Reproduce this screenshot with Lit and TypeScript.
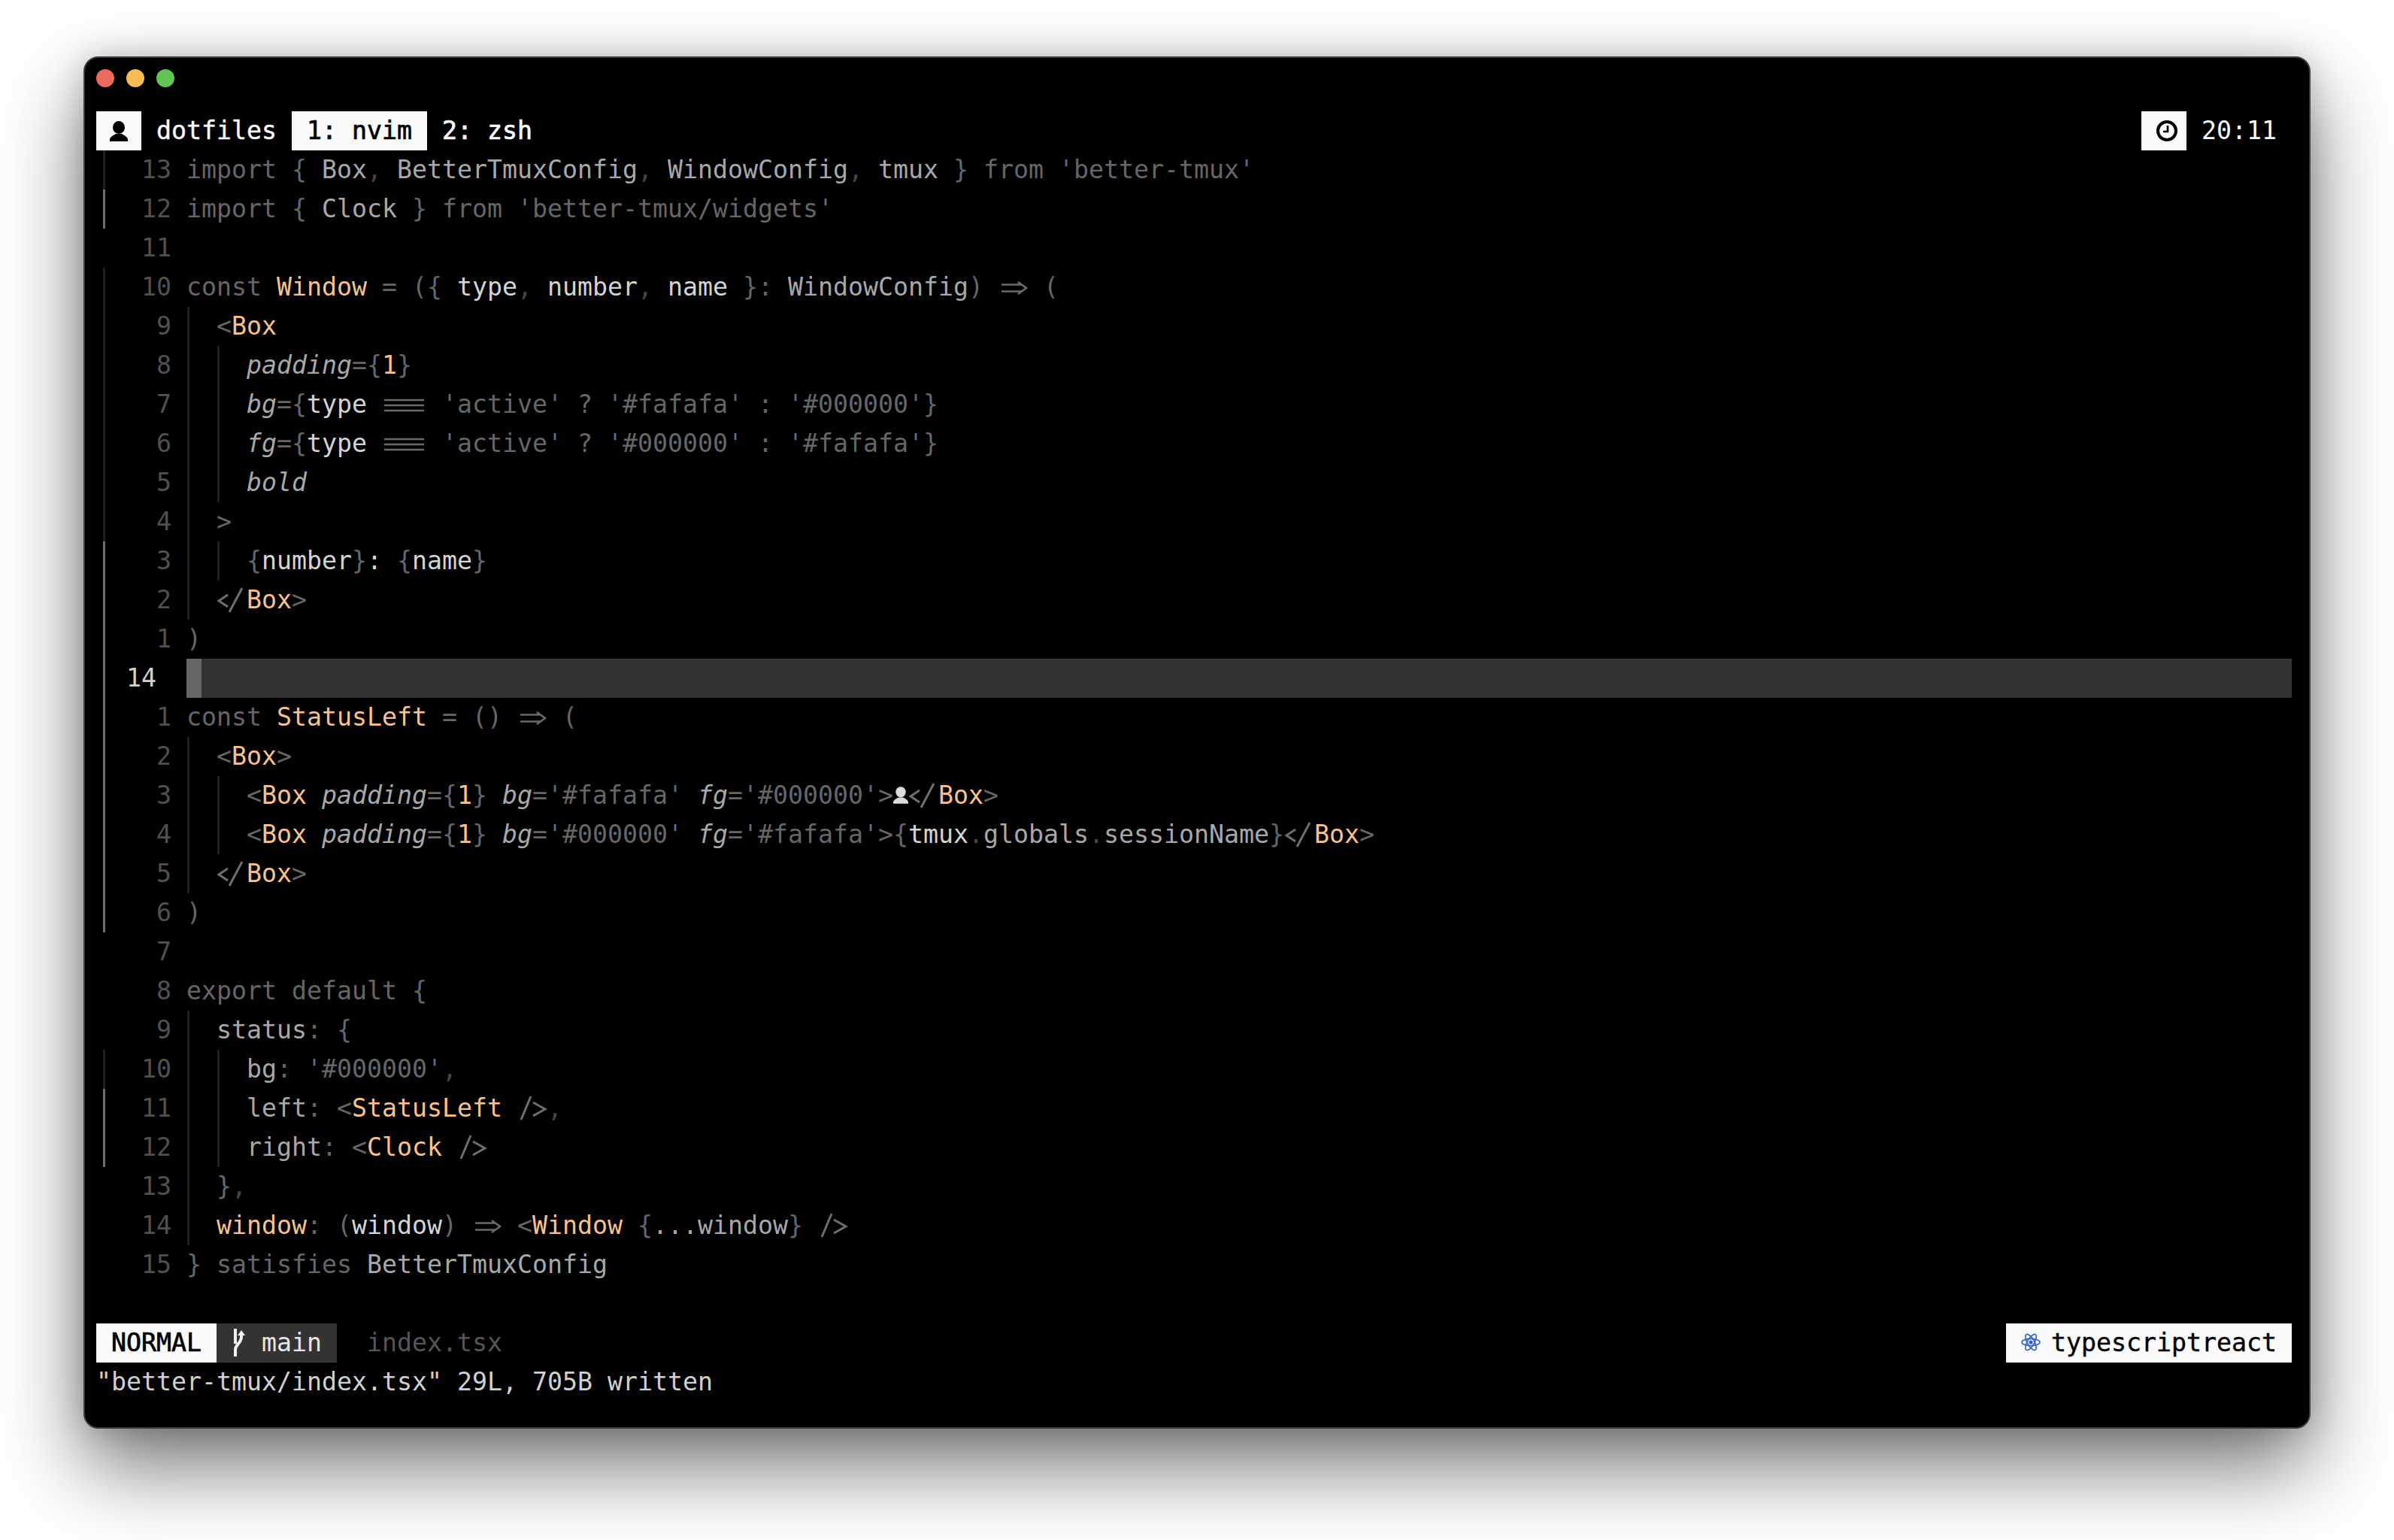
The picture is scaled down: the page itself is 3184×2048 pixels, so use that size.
import { LitElement, html, css, svg, TemplateResult } from 'lit';
import { customElement } from 'lit/decorators.js';

type Token = [string, string];
type Sign = '' | 'dark' | 'git';

interface Row {
  num: number;
  sign: Sign;
  indent: number;
  code: Token[];
}

const d = (t: string): Token => ['d', t];
const f = (t: string): Token => ['f', t];
const m = (t: string): Token => ['m', t];
const b = (t: string): Token => ['b', t];
const o = (t: string): Token => ['o', t];
const i = (t: string): Token => ['i', t];
const EQ: Token = ['lig-eq', '==='];
const ARROW: Token = ['lig-arrow', '=>'];
const CLOSE: Token = ['lig-close', '</'];
const SELF: Token = ['lig-self', '/>'];
const PERSON: Token = ['person', ''];

const above: Row[] = [
  { num: 13, sign: 'dark', indent: 0, code: [d('import { '), m('Box'), f(', '), m('BetterTmuxConfig'), f(', '), m('WindowConfig'), f(', '), m('tmux'), d(" } from 'better-tmux'")] },
  { num: 12, sign: 'git', indent: 0, code: [d('import { '), m('Clock'), d(" } from 'better-tmux/widgets'")] },
  { num: 11, sign: '', indent: 0, code: [] },
  { num: 10, sign: 'dark', indent: 0, code: [d('const '), o('Window'), d(' = ({ '), b('type'), f(', '), b('number'), f(', '), b('name'), d(' }: '), m('WindowConfig'), d(') '), ARROW, d(' (')] },
  { num: 9, sign: 'dark', indent: 1, code: [d('<'), o('Box')] },
  { num: 8, sign: 'dark', indent: 2, code: [i('padding'), d('={'), o('1'), d('}')] },
  { num: 7, sign: 'dark', indent: 2, code: [i('bg'), d('={'), b('type'), d(' '), EQ, d(" 'active' ? '#fafafa' : '#000000'}")] },
  { num: 6, sign: 'dark', indent: 2, code: [i('fg'), d('={'), b('type'), d(' '), EQ, d(" 'active' ? '#000000' : '#fafafa'}")] },
  { num: 5, sign: 'dark', indent: 2, code: [i('bold')] },
  { num: 4, sign: 'dark', indent: 1, code: [d('>')] },
  { num: 3, sign: 'git', indent: 2, code: [d('{'), b('number'), d('}'), b(': '), d('{'), b('name'), d('}')] },
  { num: 2, sign: 'git', indent: 1, code: [CLOSE, o('Box'), d('>')] },
  { num: 1, sign: 'git', indent: 0, code: [d(')')] },
];

const below: Row[] = [
  { num: 1, sign: 'git', indent: 0, code: [d('const '), o('StatusLeft'), d(' = () '), ARROW, d(' (')] },
  { num: 2, sign: 'git', indent: 1, code: [d('<'), o('Box'), d('>')] },
  { num: 3, sign: 'git', indent: 2, code: [d('<'), o('Box'), d(' '), i('padding'), d('={'), o('1'), d('} '), i('bg'), d("='#fafafa' "), i('fg'), d("='#000000'>"), PERSON, CLOSE, o('Box'), d('>')] },
  { num: 4, sign: 'git', indent: 2, code: [d('<'), o('Box'), d(' '), i('padding'), d('={'), o('1'), d('} '), i('bg'), d("='#000000' "), i('fg'), d("='#fafafa'>{"), b('tmux'), f('.'), m('globals'), f('.'), m('sessionName'), d('}'), CLOSE, o('Box'), d('>')] },
  { num: 5, sign: 'git', indent: 1, code: [CLOSE, o('Box'), d('>')] },
  { num: 6, sign: 'git', indent: 0, code: [d(')')] },
  { num: 7, sign: '', indent: 0, code: [] },
  { num: 8, sign: '', indent: 0, code: [d('export default {')] },
  { num: 9, sign: '', indent: 1, code: [m('status'), d(': {')] },
  { num: 10, sign: 'dark', indent: 2, code: [m('bg'), d(": '#000000'"), f(',')] },
  { num: 11, sign: 'git', indent: 2, code: [m('left'), d(': <'), o('StatusLeft'), d(' '), SELF, f(',')] },
  { num: 12, sign: 'git', indent: 2, code: [m('right'), d(': <'), o('Clock'), d(' '), SELF] },
  { num: 13, sign: '', indent: 1, code: [d('}'), f(',')] },
  { num: 14, sign: '', indent: 1, code: [o('window'), d(': ('), b('window'), d(') '), ARROW, d(' <'), o('Window'), d(' {'), m('...window'), d('} '), SELF] },
  { num: 15, sign: '', indent: 0, code: [d('} satisfies '), m('BetterTmuxConfig')] },
];

const personIcon = (cls: string) => html`<svg class=${cls} viewBox="0 0 24 27" fill="currentColor">
  <ellipse cx="12" cy="8.5" rx="8" ry="8.5"></ellipse>
  <path d="M0 27v-2c0-4 5-6 8-8h8c3 2 8 4 8 8v2z"></path>
</svg>`;

// ligatures of the editor font, drawn over the transparent source text
const ligatures: Record<string, TemplateResult> = {
  'lig-eq': html`<svg viewBox="0 0 60 52"><path d="M3 20h53M3 27h53M3 34h53" stroke="#6a6a6a" stroke-width="2.6" fill="none"></path></svg>`,
  'lig-arrow': html`<svg viewBox="0 0 40 52"><path d="M4 22.5h27M4 31.5h27M26 19l11 8-11 8" stroke="#6a6a6a" stroke-width="2.6" fill="none"></path></svg>`,
  'lig-close': html`<svg viewBox="0 0 40 52"><path d="M15 19 3 27l12 8M34 10 17 42" stroke="#6e6e6e" stroke-width="3" fill="none"></path></svg>`,
  'lig-self': html`<svg viewBox="0 0 40 52"><path d="M5 41 18 10M21 18l16 9-16 9" stroke="#6e6e6e" stroke-width="3" fill="none"></path></svg>`,
};

const atomOrbit = (angle: number) => svg`<ellipse cx="13" cy="12" rx="12" ry="4.6" transform="rotate(${angle} 13 12)"></ellipse>`;

@customElement('app-root')
export class AppRoot extends LitElement {
  static styles = css`
    :host {
      display: block;
      min-height: 2048px;
      box-sizing: border-box;
      padding: 75px 111px 0;
      background: #fff;
      font-family: 'DejaVu Sans Mono', 'Liberation Mono', monospace;
      font-size: 33.22px;
      line-height: 52px;
      color: #fafafa;
      font-variant-ligatures: none;
    }

    .window {
      box-sizing: border-box;
      width: 2962px;
      height: 1825px;
      padding: 15px 23px 0 15px;
      background: #000;
      border: 2px solid #3c3c3c;
      border-radius: 20px;
      box-shadow: 0 50px 110px 0 rgba(0, 0, 0, 0.55), 0 0 40px rgba(0, 0, 0, 0.18);
    }

    .lights {
      display: flex;
      gap: 16px;
      height: 24px;
      margin-bottom: 32px;
    }
    .light {
      width: 24px;
      height: 24px;
      border-radius: 50%;
    }
    .red { background: #ee6a5f; }
    .yellow { background: #f5bd4f; }
    .green { background: #61c454; }

    .bar {
      display: flex;
      height: 52px;
      white-space: pre;
    }
    .spacer { flex: 1; }
    .cell { padding: 0 20px; }
    .medium { -webkit-text-stroke: 0.4px currentColor; }
    .strong { -webkit-text-stroke: 0.7px currentColor; }
    .inv {
      background: #fafafa;
      color: #000;
    }
    .icon-box {
      display: flex;
      align-items: center;
      justify-content: center;
      width: 60px;
      height: 52px;
      background: #fafafa;
      color: #000;
    }
    .session-icon { width: 24px; height: 27px; }
    .clock-icon { width: 28px; height: 28px; margin: 0 0 0 8px; }

    .row {
      display: flex;
      height: 52px;
      white-space: pre;
    }
    .sign { width: 20px; height: 52px; }
    .sign.dark, .sign.git {
      background-repeat: no-repeat;
      background-size: 3px 100%;
      background-position: 9px 0;
    }
    .sign.dark { background-image: linear-gradient(#1e1e1e, #1e1e1e); }
    .sign.git { background-image: linear-gradient(#6c6c6c, #6c6c6c); }
    .num {
      width: 80px;
      margin-right: 20px;
      text-align: right;
      color: #505050;
    }
    .code { flex: 1; }
    .indent {
      display: inline-block;
      width: 40px;
      height: 52px;
      vertical-align: top;
      background: linear-gradient(#1e1e1e, #1e1e1e) 1px 0 / 3px 100% no-repeat;
    }

    .current .num {
      padding-right: 20px;
      box-sizing: border-box;
      color: #d0d0d0;
    }
    .current .code { background: #333; }
    .cursor {
      display: block;
      width: 20px;
      height: 52px;
      background: #666;
    }

    .d { color: #666; }
    .f { color: #454545; }
    .m { color: #a8a8a8; }
    .b { color: #d4d4d4; }
    .o { color: #f9c28c; }
    .i { color: #a8a8a8; font-style: italic; }

    .lig {
      display: inline-block;
      position: relative;
      height: 52px;
      vertical-align: top;
      color: transparent;
    }
    .lig svg {
      position: absolute;
      left: 0;
      top: 0;
      width: 100%;
      height: 52px;
    }
    .inline-person {
      display: inline-block;
      width: 20px;
      height: 23px;
      margin-top: 14px;
      vertical-align: top;
      color: #dcdcdc;
    }

    .status { margin-top: 52px; }
    .branch {
      display: flex;
      width: 160px;
      box-sizing: border-box;
      padding-left: 22px;
      background: #333;
      color: #e6e6e6;
    }
    .branch-icon {
      width: 16px;
      height: 37px;
      margin: 7px 22px 0 0;
      color: #f0f0f0;
    }
    .filename {
      margin-left: 40px;
      color: #555;
    }
    .filetype {
      display: flex;
      padding: 0 20px;
      background: #fafafa;
      color: #000;
    }
    .atom {
      width: 26px;
      height: 24px;
      margin: 13px 14px 0 0;
      fill: none;
      stroke: #2f5fd0;
      stroke-width: 1.6;
    }
    .message { color: #d0d0d0; }
  `;

  private renderToken([cls, text]: Token) {
    if (cls === 'person') return personIcon('inline-person');
    const lig = ligatures[cls];
    if (lig) return html`<span class="lig">${text}${lig}</span>`;
    return html`<span class=${cls}>${text}</span>`;
  }

  private renderRow(row: Row) {
    const indents = Array.from({ length: row.indent }, () => html`<span class="indent"></span>`);
    return html`<div class="row">
      <div class="sign ${row.sign}"></div>
      <div class="num">${row.num}</div>
      <div class="code">${indents}${row.code.map((t) => this.renderToken(t))}</div>
    </div>`;
  }

  render() {
    return html`<div class="window">
      <div class="lights">
        <div class="light red"></div>
        <div class="light yellow"></div>
        <div class="light green"></div>
      </div>

      <div class="bar">
        <div class="icon-box">${personIcon('session-icon')}</div>
        <div class="cell medium">dotfiles</div>
        <div class="cell inv strong">1: nvim</div>
        <div class="cell strong">2: zsh</div>
        <div class="spacer"></div>
        <div class="icon-box">
          <svg class="clock-icon" viewBox="0 0 28 28" fill="none" stroke="currentColor">
            <circle cx="14" cy="14" r="12" stroke-width="4"></circle>
            <path d="M15 7v8H9" stroke-width="2.6"></path>
          </svg>
        </div>
        <div class="cell">20:11</div>
      </div>

      ${above.map((r) => this.renderRow(r))}
      <div class="row current">
        <div class="sign git"></div>
        <div class="num">14</div>
        <div class="code"><span class="cursor"></span></div>
      </div>
      ${below.map((r) => this.renderRow(r))}

      <div class="bar status">
        <div class="cell inv strong">NORMAL</div>
        <div class="branch">
          <svg class="branch-icon" viewBox="0 0 16 37" fill="none" stroke="currentColor" stroke-width="4">
            <path d="M3 0v20M3 37V28c0-7 8-9 8-17V7"></path>
            <path d="M11 2l5 7H6z" fill="currentColor" stroke="none"></path>
          </svg>
          <span>main</span>
        </div>
        <div class="filename">index.tsx</div>
        <div class="spacer"></div>
        <div class="filetype">
          <svg class="atom" viewBox="0 0 26 24">
            ${atomOrbit(0)}${atomOrbit(60)}${atomOrbit(120)}
            <circle cx="13" cy="12" r="2.6" fill="#2f5fd0" stroke="none"></circle>
          </svg>
          <span class="medium">typescriptreact</span>
        </div>
      </div>
      <div class="bar message">"better-tmux/index.tsx" 29L, 705B written</div>
    </div>`;
  }
}
